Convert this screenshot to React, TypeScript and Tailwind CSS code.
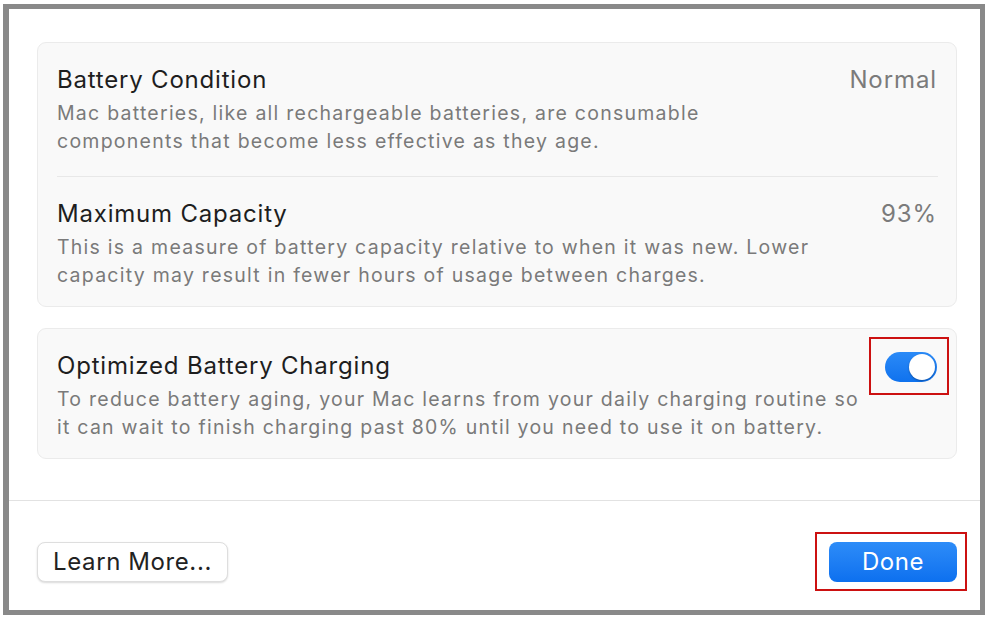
import { useState } from "react";

interface RowProps {
  title: string;
  value?: string;
  description: string[];
}

function InfoRow({ title, value, description }: RowProps) {
  return (
    <div className="flex items-start justify-between">
      <div>
        <div className="text-[24px] leading-[28px] tracking-[0.8px] text-[#1e1e1e]">{title}</div>
        <div className="mt-[5px] text-[19.5px] leading-[28px] tracking-[1.25px] text-[#7a7a7a]">
          {description.map((line) => (
            <div key={line} className="whitespace-nowrap">{line}</div>
          ))}
        </div>
      </div>
      {value && (
        <div className="text-[24px] leading-[28px] tracking-[0.9px] text-[#7b7b7b]">{value}</div>
      )}
    </div>
  );
}

function Toggle({ on, onChange }: { on: boolean; onChange: () => void }) {
  return (
    <button
      onClick={onChange}
      className={
        on
          ? "relative flex h-[30px] w-[52px] items-center rounded-full bg-gradient-to-b from-[#2a8af7] to-[#0f72ee] px-[2px] justify-end"
          : "relative flex h-[30px] w-[52px] items-center rounded-full bg-[#dcdcdc] px-[2px] justify-start"
      }
    >
      <span className="h-[26px] w-[26px] rounded-full bg-white shadow-[0_1px_2px_rgba(0,0,0,0.3)]" />
    </button>
  );
}

export default function App() {
  const [optimized, setOptimized] = useState(true);

  return (
    <div
      className="h-[619px] w-[990px] bg-white pl-[3px] pt-[4px]"
      style={{ fontFamily: "Inter, 'Open Sans', sans-serif" }}
    >
      <div className="flex h-[611px] w-[982px] flex-col border-[5px] border-l-[6px] border-[#898989] bg-white">
        {/* cards */}
        <div className="flex h-[491px] flex-col gap-[21px] pl-[28px] pt-[33px]">
          <div className="w-[920px] rounded-[9px] border border-[#ebebeb] bg-[#f9f9f9] px-[19px] pt-[23px] pb-[17px]">
            <InfoRow
              title="Battery Condition"
              value="Normal"
              description={[
                "Mac batteries, like all rechargeable batteries, are consumable",
                "components that become less effective as they age.",
              ]}
            />
            <div className="mt-[21px] mb-[23px] mr-[-1px] h-px bg-[#e8e8e8]" />
            <InfoRow
              title="Maximum Capacity"
              value="93%"
              description={[
                "This is a measure of battery capacity relative to when it was new. Lower",
                "capacity may result in fewer hours of usage between charges.",
              ]}
            />
          </div>

          <div className="flex w-[920px] items-start justify-between rounded-[9px] border border-[#ebebeb] bg-[#f9f9f9] px-[19px] pt-[23px] pb-[17px]">
            <InfoRow
              title="Optimized Battery Charging"
              description={[
                "To reduce battery aging, your Mac learns from your daily charging routine so",
                "it can wait to finish charging past 80% until you need to use it on battery.",
              ]}
            />
            <div className="relative">
              <Toggle on={optimized} onChange={() => setOptimized(!optimized)} />
              <div className="pointer-events-none absolute left-[-16px] top-[-15px] h-[58px] w-[80px] border-2 border-[#cc1111]" />
            </div>
          </div>
        </div>

        <div className="h-px bg-[#e2e2e2]" />

        {/* footer */}
        <div className="flex items-start justify-between pl-[28px] pr-[23px] pt-[41px]">
          <button className="h-[40px] w-[191px] rounded-[8px] border border-[#dedede] bg-white text-[24px] tracking-[0.6px] text-[#222] shadow-[0_1px_2px_rgba(0,0,0,0.15)]">
            Learn More...
          </button>
          <div className="relative">
            <button className="h-[40px] w-[128px] rounded-[8px] bg-gradient-to-b from-[#2d8cf8] to-[#0c70ef] text-[24px] tracking-[0.5px] text-white">
              Done
            </button>
            <div className="pointer-events-none absolute left-[-14px] top-[-10px] h-[59px] w-[152px] border-2 border-[#cc1111]" />
          </div>
        </div>
      </div>
    </div>
  );
}
